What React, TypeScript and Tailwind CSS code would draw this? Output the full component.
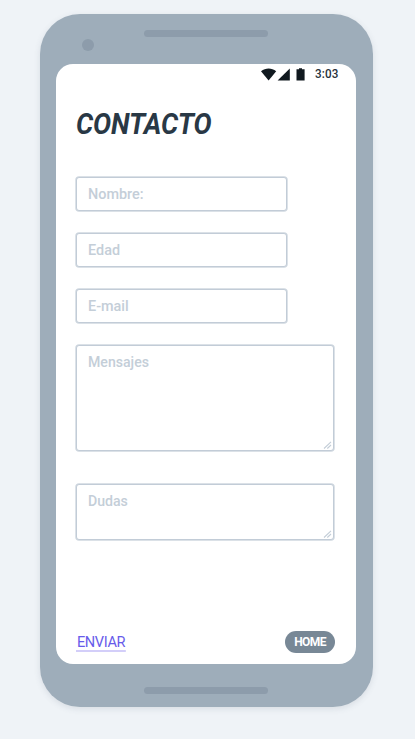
import React from "react";

function StatusBar() {
  return (
    <div className="flex h-5 items-center justify-end pr-[17px] text-[#10191f]">
      <svg width="45" height="14" viewBox="0 0 45 14" fill="currentColor" className="mr-[9px]">
        <path d="M0 4.2C4.6 0.7 10.6 0.7 15.2 4.2L7.6 13.6Z" />
        <path d="M28.8 1.5V13.5H16.6Z" />
        <path d="M38 1.2h3v1h2.6v11.4h-8.1V2.2H38Z" />
      </svg>
      <span className="w-6 origin-left scale-x-[0.97] whitespace-nowrap text-[12px] leading-5 font-medium tracking-[0.15px] text-[#27313a]">3:03</span>
    </div>
  );
}

const box = "rounded-[3px] border border-[#c2ccd7] bg-white text-[15.5px] font-medium text-[#c4ced8] shadow-[0_0_0_0.75px_#d0d8e0]";

function TextField({ label }: { label: string }) {
  return (
    <div className={`flex h-[34px] w-[211px] items-center pt-px pl-[10.5px] ${box}`}>
      <span className="inline-block origin-left scale-x-[0.93]">{label}</span>
    </div>
  );
}

function TextArea({ label, className }: { label: string; className: string }) {
  return (
    <div className={`relative w-[258px] pt-[5px] pl-[10.5px] leading-[22px] ${box} ${className}`}>
      <span className="inline-block origin-left scale-x-[0.91]">{label}</span>
      <svg width="9" height="8" viewBox="0 0 9 8" className="absolute right-px bottom-px" stroke="#c4ced8" strokeWidth="1.1">
        <path d="M1 7.5 8 .8M4.3 7.5 8 4" />
      </svg>
    </div>
  );
}

export default function App() {
  return (
    <div className="h-[739px] w-[415px] bg-[#eff3f7] pt-[13.5px] pl-[39.5px] font-['Roboto','Liberation_Sans',sans-serif]">
      <div className="h-[693.5px] w-[333px] rounded-[40px] bg-[#9eadba] px-[16.5px] shadow-[0_2px_6px_rgba(60,80,100,0.13)]">
        <div className="relative h-[50.5px]">
          <div className="absolute top-[25px] left-[25.5px] size-3 rounded-full bg-[#8d9cab]" />
          <div className="absolute top-[16.5px] left-[88px] h-[7px] w-[124px] rounded-full bg-[#8d9cab]" />
        </div>
        <main className="flex h-[600px] w-[300px] flex-col rounded-[17px] bg-white">
          <StatusBar />
          <div className="flex flex-1 flex-col pl-5">
            <h1 className="mt-[22px] h-9 origin-left scale-x-[0.9] text-[30px] leading-9 font-bold tracking-[-0.1px] whitespace-nowrap text-[#293845] italic">CONTACTO</h1>
            <div className="mt-[35px] flex flex-col gap-[22px]">
              <TextField label="Nombre:" />
              <TextField label="Edad" />
              <TextField label="E-mail" />
              <TextArea label="Mensajes" className="h-[106px]" />
            </div>
            <TextArea label="Dudas" className="mt-[33px] h-14" />
            <div className="mt-[90.75px] flex h-[22px] w-[259px] items-start justify-between">
              <a className="mt-px h-[20px] origin-left scale-x-[0.94] border-b-2 border-[#d3cef9] px-px text-[15.5px] leading-[20px] tracking-[-0.4px] text-[#675bea]">ENVIAR</a>
              <button className="h-[22px] w-[50px] rounded-full bg-[#788896] text-[12px] leading-[20px] font-bold tracking-[-0.6px] text-white">HOME</button>
            </div>
          </div>
        </main>
        <div className="mx-auto mt-[23px] h-[7px] w-[124px] rounded-full bg-[#8d9cab]" />
      </div>
    </div>
  );
}
